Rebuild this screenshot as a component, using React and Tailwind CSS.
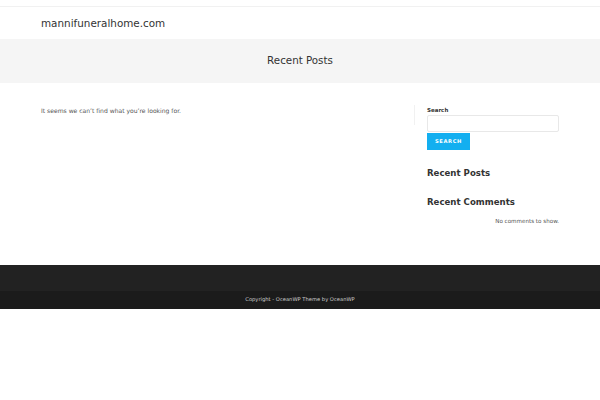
export default function App() {
  const font = { fontFamily: '"DejaVu Sans", "Liberation Sans", sans-serif' };
  return (
    <div className="w-[600px] h-[400px] bg-white overflow-hidden" style={font}>
      <div className="h-[7px] border-b border-[#f1f1f1]"></div>
      <header className="h-[32px] flex items-center px-[41px] pt-[2px]">
        <span className="text-[10.4px] text-[#333]">mannifuneralhome.com</span>
      </header>
      <div className="h-[44px] bg-[#f5f5f5] flex items-center justify-center">
        <h1 className="text-[10.3px] text-[#333]">Recent Posts</h1>
      </div>
      <div className="h-[182px] flex px-[41px] pt-[22px]">
        <div className="w-[373px]">
          <p className="text-[6.05px] text-[#555] leading-[10px] pt-[1px]">It seems we can’t find what you’re looking for.</p>
        </div>
        <aside className="w-[145px] relative pl-[13px]">
          <div className="absolute left-0 top-0 h-[20px] border-l border-[#f1f1f1]"></div>
          <div className="text-[5.5px] font-bold text-[#333] leading-[8px] pt-[1px]">Search</div>
          <div className="mt-[1px] h-[17px] border border-[#e8e8e8] rounded-[2px]"></div>
          <button className="mt-[1px] h-[17px] w-[43px] bg-[#13aff0] text-white text-[5.2px] font-bold tracking-[0.6px] flex items-center justify-center">SEARCH</button>
          <h2 className="mt-[16px] text-[8.6px] font-bold text-[#333] leading-[14px]">Recent Posts</h2>
          <h2 className="mt-[15px] text-[8.6px] font-bold text-[#333] leading-[14px]">Recent Comments</h2>
          <p className="mt-[7px] text-right text-[5.6px] text-[#555] leading-[10px]">No comments to show.</p>
        </aside>
      </div>
      <footer>
        <div className="h-[26px] bg-[#222]"></div>
        <div className="h-[18px] bg-[#1b1b1b] flex items-center justify-center">
          <span className="text-[5.2px] text-[#ccc]">Copyright - OceanWP Theme by OceanWP</span>
        </div>
      </footer>
    </div>
  );
}
